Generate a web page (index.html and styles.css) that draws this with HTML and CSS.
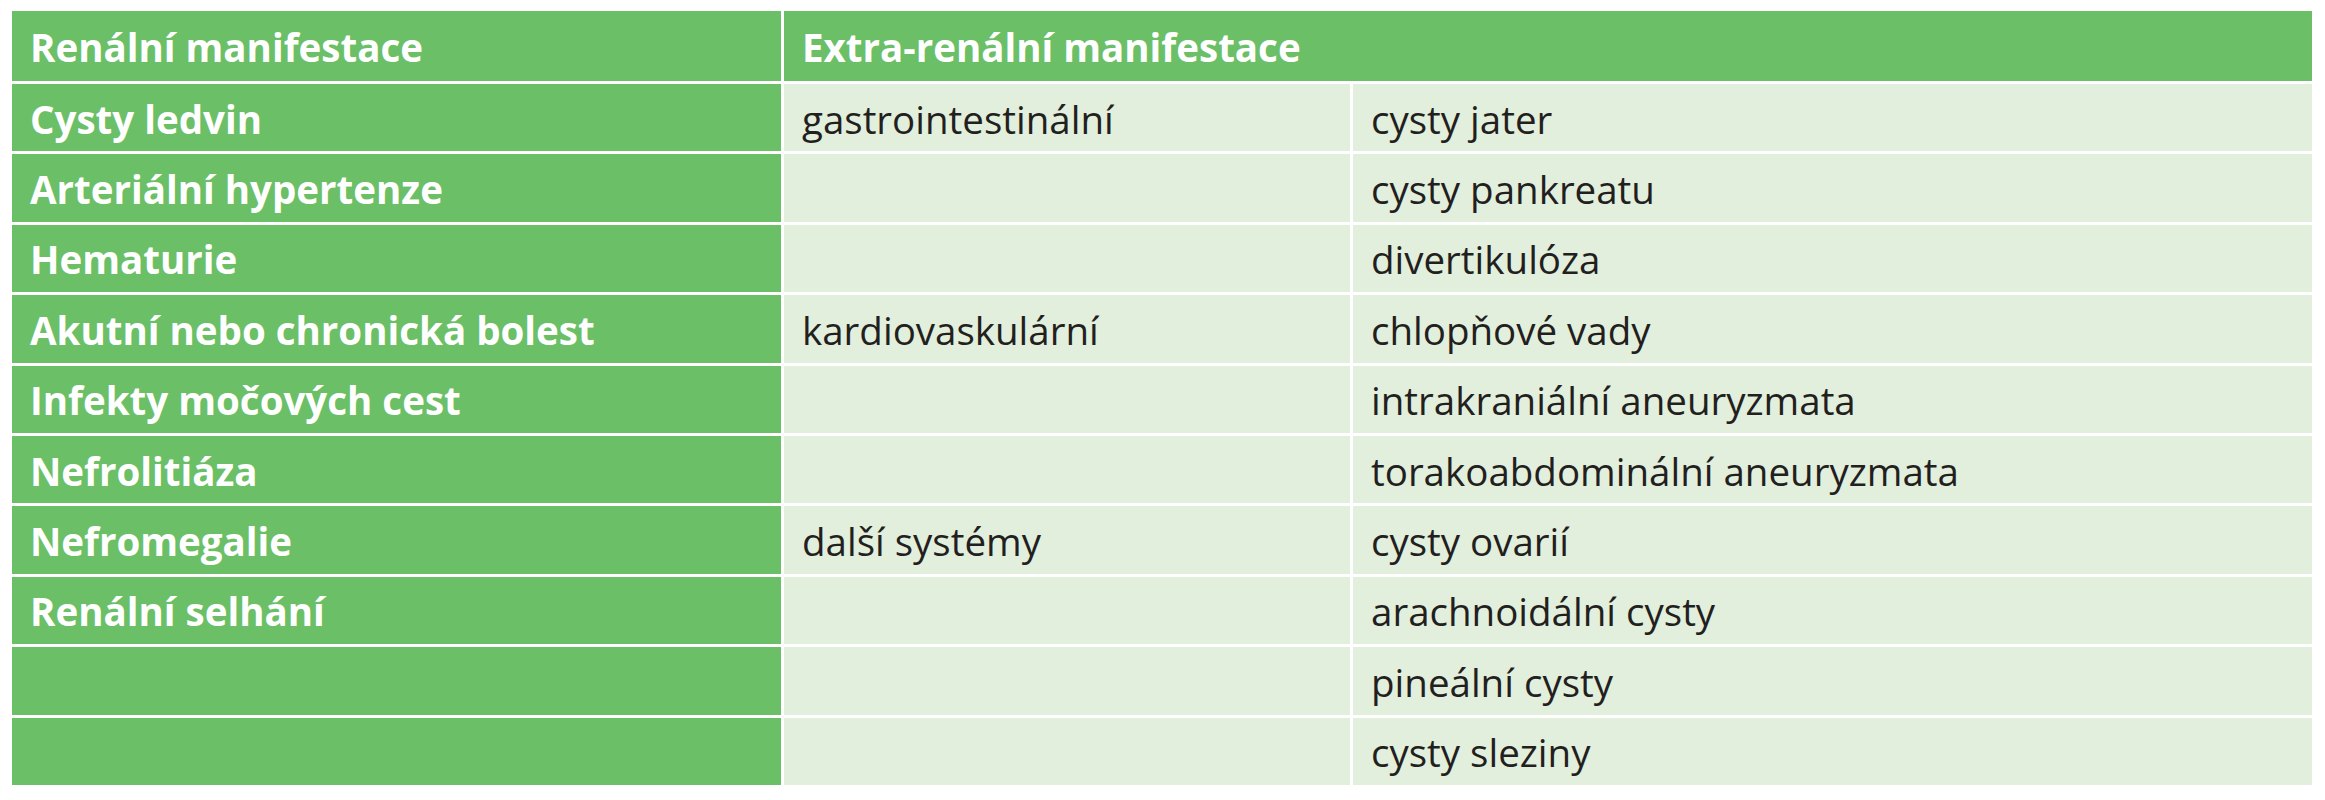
FILE: index.html
```html
<!DOCTYPE html>
<html lang="cs">
<head>
<meta charset="utf-8">
<title>Manifestace</title>
<link rel="stylesheet" href="styles.css">
</head>
<body>
<div class="tbl">
  <div class="c h">Renální manifestace</div>
  <div class="c h span">Extra-renální manifestace</div>

  <div class="c h">Cysty ledvin</div>
  <div class="c l">gastrointestinální</div>
  <div class="c l">cysty jater</div>

  <div class="c h">Arteriální hypertenze</div>
  <div class="c l"></div>
  <div class="c l">cysty pankreatu</div>

  <div class="c h">Hematurie</div>
  <div class="c l"></div>
  <div class="c l">divertikulóza</div>

  <div class="c h">Akutní nebo chronická bolest</div>
  <div class="c l">kardiovaskulární</div>
  <div class="c l">chlopňové vady</div>

  <div class="c h">Infekty močových cest</div>
  <div class="c l"></div>
  <div class="c l">intrakraniální aneuryzmata</div>

  <div class="c h">Nefrolitiáza</div>
  <div class="c l"></div>
  <div class="c l">torakoabdominální aneuryzmata</div>

  <div class="c h">Nefromegalie</div>
  <div class="c l">další systémy</div>
  <div class="c l">cysty ovarií</div>

  <div class="c h">Renální selhání</div>
  <div class="c l"></div>
  <div class="c l">arachnoidální cysty</div>

  <div class="c h"></div>
  <div class="c l"></div>
  <div class="c l">pineální cysty</div>

  <div class="c h"></div>
  <div class="c l"></div>
  <div class="c l">cysty sleziny</div>
</div>
</body>
</html>
```
FILE: styles.css
```css
html, body {
  margin: 0;
  padding: 0;
  background: #ffffff;
}
body {
  padding: 11px 0 0 12px;
  font-family: "Open Sans", "Noto Sans", sans-serif;
}
.tbl {
  display: grid;
  grid-template-columns: 769px 566px 959px;
  grid-template-rows: 70px;
  grid-auto-rows: 67.4px;
  row-gap: 3px;
  column-gap: 3px;
  background: #ffffff;
  width: 2300px;
}
.c {
  display: flex;
  align-items: center;
  padding-left: 18px;
  padding-top: 2px;
  font-size: 38.5px;
  white-space: nowrap;
}
.h {
  background: #6bbf67;
  color: #ffffff;
  font-weight: 700;
}
.span {
  grid-column: 2 / 4;
}
.l {
  background: #e2efdc;
  color: #231f20;
  font-weight: 400;
}
```
